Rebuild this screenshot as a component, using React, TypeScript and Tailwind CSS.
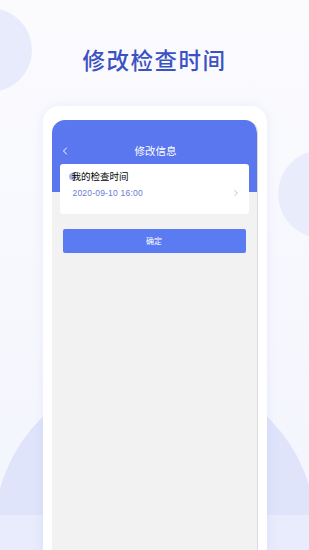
import { ChevronLeft, ChevronRight } from "lucide-react";

const font = {
  fontFamily: '"Noto Sans CJK SC", "Liberation Sans", sans-serif',
};

export default function App() {
  return (
    <div
      className="relative h-[550px] w-[309px] overflow-hidden bg-gradient-to-b from-[#fbfbfe] to-[#f3f5fd]"
      style={font}
    >
      {/* background decoration */}
      <div className="absolute -left-[52px] top-[8px] h-[84px] w-[84px] rounded-full bg-[#e8ebfb]" />
      <div className="absolute left-[278px] top-[150px] h-[88px] w-[88px] rounded-full bg-[#e9ecfb]" />
      <div className="absolute left-[-6px] top-[371px] h-[322px] w-[322px] rounded-full bg-[#dfe4fb]" />
      <div className="absolute left-0 top-[515px] h-[35px] w-full bg-white/30" />

      <div className="relative flex flex-col items-center">
        <h1 className="mt-[44px] text-[22.5px] font-medium leading-[30px] tracking-[1.5px] text-[#3b52c4]">
          修改检查时间
        </h1>

        <div className="mt-[32px] h-[460px] w-[224px] rounded-t-[16px] bg-white px-[9px] pt-[14px] shadow-[0_0_12px_rgba(120,140,220,0.12)]">
          <div className="h-full overflow-hidden rounded-t-[13px] border-r border-[#dcdcdc] bg-[#f2f2f2]">
            <div className="relative h-[72px] bg-[#5a77f0]">
              <div className="flex h-[44px] items-center pt-[18px]">
                <ChevronLeft className="ml-[7px] text-white" size={12} strokeWidth={2} />
                <span className="ml-[64px] text-[10.5px] text-white">修改信息</span>
              </div>
            </div>
            <div className="relative mx-[8px] -mt-[28px] h-[50px] rounded-[3px] bg-white">
              <div className="flex items-center pl-[9px] pt-[5px]">
                <span className="h-[7px] w-[7px] rounded-full bg-[#a9b4ef]" />
                <span className="-ml-[4px] text-[9.5px] leading-[14px] text-black">我的检查时间</span>
              </div>
              <div className="mt-[4px] flex items-center justify-between pl-[13px] pr-[8px]">
                <span className="text-[8.5px] leading-[12px] tracking-[0.2px] text-[#6b7ad6]" style={{ fontFamily: '"Liberation Sans", sans-serif' }}>
                  2020-09-10 16:00
                </span>
                <ChevronRight className="text-[#8b97de]" size={10} strokeWidth={1.5} />
              </div>
            </div>
            <button className="mx-[11px] mt-[15px] flex h-[24px] w-[183px] items-center justify-center rounded-[2px] bg-[#5b7bf2] text-[8px] text-white">
              确定
            </button>
          </div>
        </div>
      </div>
    </div>
  );
}
